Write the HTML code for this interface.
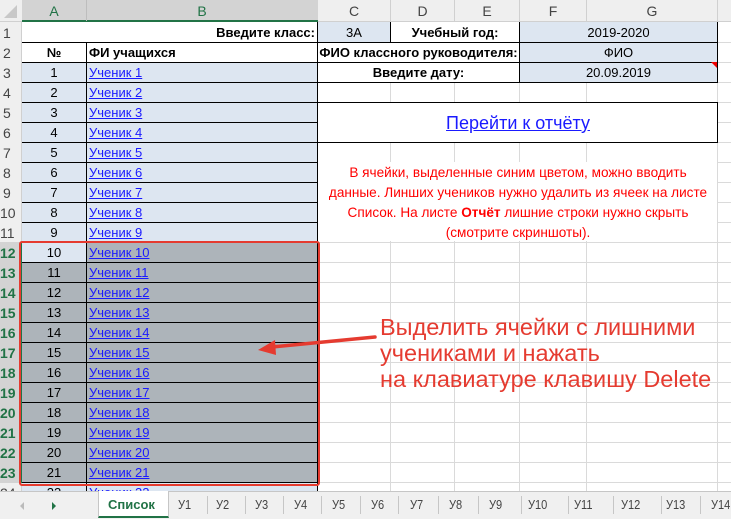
<!DOCTYPE html>
<html><head><meta charset="utf-8"><style>
*{margin:0;padding:0;box-sizing:border-box}
body{width:731px;height:519px;overflow:hidden;position:relative;background:#fff;font-family:"Liberation Sans",Arial,sans-serif;font-size:13px;color:#000}
.a{position:absolute}
.t{position:absolute;height:20px;line-height:20px;white-space:nowrap}
.ctr{text-align:center}
.b{font-weight:bold}
.lnk{color:#1a1aff;text-decoration:underline}
.rh{position:absolute;left:0;width:22px;height:20px;line-height:20px;padding-left:3px;color:#444;font-size:14px}
.rs{color:#217346;font-weight:bold}
.tab{position:absolute;top:497px;color:#444;font-size:13px;transform:scaleX(.85);transform-origin:left}
</style></head><body>
<div class="a" style="left:0;top:23px;width:731px;height:468px;background:repeating-linear-gradient(to bottom,transparent 0 19px,#dadada 19px 20px)"></div>
<div class="a" style="left:86px;top:0;width:1px;height:491px;background:#dadada"></div>
<div class="a" style="left:317px;top:0;width:1px;height:491px;background:#dadada"></div>
<div class="a" style="left:390px;top:0;width:1px;height:491px;background:#dadada"></div>
<div class="a" style="left:454px;top:0;width:1px;height:491px;background:#dadada"></div>
<div class="a" style="left:519px;top:0;width:1px;height:491px;background:#dadada"></div>
<div class="a" style="left:586px;top:0;width:1px;height:491px;background:#dadada"></div>
<div class="a" style="left:717px;top:0;width:1px;height:491px;background:#dadada"></div>

<div class="a" style="left:0;top:0;width:731px;height:22px;background:#efefef;border-bottom:1px solid #d0d0d0"></div>
<div class="a" style="left:4px;top:5px;width:0;height:0;border-left:13px solid transparent;border-bottom:13px solid #c8c8c8"></div>
<div class="a" style="left:22px;top:0;width:296px;height:22px;background:#d3d3d3;border-bottom:2px solid #217346"></div>
<div class="a" style="left:86px;top:0;width:1px;height:21px;background:#bdbdbd"></div>
<div class="t ctr" style="left:22px;top:1px;width:64px;color:#217346;font-size:14px">A</div>
<div class="t ctr" style="left:87px;top:1px;width:230px;color:#217346;font-size:14px">B</div>
<div class="t ctr" style="left:318px;top:1px;width:72px;color:#444;font-size:14px">C</div>
<div class="t ctr" style="left:391px;top:1px;width:63px;color:#444;font-size:14px">D</div>
<div class="t ctr" style="left:455px;top:1px;width:64px;color:#444;font-size:14px">E</div>
<div class="t ctr" style="left:520px;top:1px;width:66px;color:#444;font-size:14px">F</div>
<div class="t ctr" style="left:587px;top:1px;width:130px;color:#444;font-size:14px">G</div>
<div class="a" style="left:390px;top:0;width:1px;height:22px;background:#d0d0d0"></div>
<div class="a" style="left:454px;top:0;width:1px;height:22px;background:#d0d0d0"></div>
<div class="a" style="left:519px;top:0;width:1px;height:22px;background:#d0d0d0"></div>
<div class="a" style="left:586px;top:0;width:1px;height:22px;background:#d0d0d0"></div>
<div class="a" style="left:717px;top:0;width:1px;height:22px;background:#d0d0d0"></div>

<div class="a" style="left:0;top:22px;width:22px;height:469px;background:#efefef;border-right:1px solid #d0d0d0"></div>
<div class="a" style="left:0;top:242px;width:22px;height:241px;background:#d3d3d3;border-right:2px solid #217346"></div>
<div class="a" style="left:0;top:22px;width:22px;height:469px;background:repeating-linear-gradient(to bottom,transparent 0 20px,#d0d0d0 20px 21px);background-size:22px 20px"></div>
<div class="rh" style="top:23px">1</div><div class="rh" style="top:43px">2</div><div class="rh" style="top:63px">3</div><div class="rh" style="top:83px">4</div><div class="rh" style="top:103px">5</div><div class="rh" style="top:123px">6</div><div class="rh" style="top:143px">7</div><div class="rh" style="top:163px">8</div><div class="rh" style="top:183px">9</div><div class="rh" style="top:203px;padding-left:0">10</div><div class="rh" style="top:223px;padding-left:0">11</div>
<div class="rh rs" style="top:243px;padding-left:0">12</div><div class="rh rs" style="top:263px;padding-left:0">13</div><div class="rh rs" style="top:283px;padding-left:0">14</div><div class="rh rs" style="top:303px;padding-left:0">15</div><div class="rh rs" style="top:323px;padding-left:0">16</div><div class="rh rs" style="top:343px;padding-left:0">17</div><div class="rh rs" style="top:363px;padding-left:0">18</div><div class="rh rs" style="top:383px;padding-left:0">19</div><div class="rh rs" style="top:403px;padding-left:0">20</div><div class="rh rs" style="top:423px;padding-left:0">21</div><div class="rh rs" style="top:443px;padding-left:0">22</div><div class="rh rs" style="top:463px;padding-left:0">23</div><div class="rh" style="top:483px;padding-left:0">24</div>

<div class="a" style="left:22px;top:22px;width:296px;height:20px;background:#fff"></div>
<div class="a" style="left:22px;top:42px;width:296px;height:20px;background:#fff"></div>
<div class="a" style="left:22px;top:62px;width:296px;height:180px;background:#dde6f1"></div>
<div class="a" style="left:22px;top:242px;width:296px;height:241px;background:#adb4ba"></div>
<div class="a" style="left:22px;top:242px;width:65px;height:20px;background:#dde6f1"></div>
<div class="a" style="left:22px;top:482px;width:296px;height:9px;background:#dde6f1"></div>
<div class="a" style="left:318px;top:22px;width:73px;height:20px;background:#dde6f1"></div>
<div class="a" style="left:391px;top:22px;width:129px;height:20px;background:#fff"></div>
<div class="a" style="left:318px;top:42px;width:202px;height:40px;background:#fff"></div>
<div class="a" style="left:520px;top:22px;width:198px;height:60px;background:#dde6f1"></div>
<div class="a" style="left:318px;top:102px;width:400px;height:40px;background:#fff"></div>
<div class="a" style="left:318px;top:162px;width:399px;height:79px;background:#fff"></div>

<div class="a" style="left:22px;top:42px;width:296px;height:442px;background:repeating-linear-gradient(to bottom,#000 0 1px,transparent 1px 20px)"></div>
<div class="a" style="left:86px;top:42px;width:1px;height:449px;background:#000"></div>
<div class="a" style="left:317px;top:22px;width:1px;height:469px;background:#000"></div>
<div class="a" style="left:318px;top:42px;width:400px;height:1px;background:#000"></div>
<div class="a" style="left:318px;top:62px;width:400px;height:1px;background:#000"></div>
<div class="a" style="left:318px;top:82px;width:400px;height:1px;background:#000"></div>
<div class="a" style="left:390px;top:22px;width:1px;height:20px;background:#000"></div>
<div class="a" style="left:519px;top:22px;width:1px;height:60px;background:#000"></div>
<div class="a" style="left:717px;top:22px;width:1px;height:60px;background:#000"></div>
<div class="a" style="left:317px;top:102px;width:401px;height:41px;border:1px solid #000"></div>
<div class="a" style="left:711px;top:62px;width:0;height:0;border-left:6px solid transparent;border-top:6px solid #e00"></div>

<div class="t b" style="left:22px;top:23px;width:293px;text-align:right">Введите класс:</div>
<div class="t ctr" style="left:318px;top:23px;width:72px">3А</div>
<div class="t ctr b" style="left:391px;top:23px;width:128px">Учебный год:</div>
<div class="t ctr" style="left:520px;top:23px;width:197px">2019-2020</div>
<div class="t ctr b" style="left:22px;top:43px;width:64px">№</div>
<div class="t b" style="left:89px;top:43px">ФИ учащихся</div>
<div class="t ctr b" style="left:318px;top:43px;width:201px">ФИО классного руководителя:</div>
<div class="t ctr" style="left:520px;top:43px;width:197px">ФИО</div>
<div class="t ctr b" style="left:318px;top:63px;width:201px">Введите дату:</div>
<div class="t ctr" style="left:520px;top:63px;width:197px">20.09.2019</div>
<div class="t ctr lnk" style="left:318px;top:111px;width:400px;font-size:18px;height:24px;line-height:24px">Перейти к отчёту</div>
<div class="a ctr" style="left:318px;top:163px;width:400px;line-height:20px;color:#f00;font-size:13.6px;white-space:nowrap">В ячейки, выделенные синим цветом, можно вводить<br>данные. Линших учеников нужно удалить из ячеек на листе<br>Список. На листе <b>Отчёт</b> лишние строки нужно скрыть<br>(смотрите скриншоты).</div>

<div class="t ctr" style="left:22px;top:63px;width:64px">1</div><div class="t lnk" style="left:89px;top:63px">Ученик 1</div>
<div class="t ctr" style="left:22px;top:83px;width:64px">2</div><div class="t lnk" style="left:89px;top:83px">Ученик 2</div>
<div class="t ctr" style="left:22px;top:103px;width:64px">3</div><div class="t lnk" style="left:89px;top:103px">Ученик 3</div>
<div class="t ctr" style="left:22px;top:123px;width:64px">4</div><div class="t lnk" style="left:89px;top:123px">Ученик 4</div>
<div class="t ctr" style="left:22px;top:143px;width:64px">5</div><div class="t lnk" style="left:89px;top:143px">Ученик 5</div>
<div class="t ctr" style="left:22px;top:163px;width:64px">6</div><div class="t lnk" style="left:89px;top:163px">Ученик 6</div>
<div class="t ctr" style="left:22px;top:183px;width:64px">7</div><div class="t lnk" style="left:89px;top:183px">Ученик 7</div>
<div class="t ctr" style="left:22px;top:203px;width:64px">8</div><div class="t lnk" style="left:89px;top:203px">Ученик 8</div>
<div class="t ctr" style="left:22px;top:223px;width:64px">9</div><div class="t lnk" style="left:89px;top:223px">Ученик 9</div>
<div class="t ctr" style="left:22px;top:243px;width:64px">10</div><div class="t lnk" style="left:89px;top:243px">Ученик 10</div>
<div class="t ctr" style="left:22px;top:263px;width:64px">11</div><div class="t lnk" style="left:89px;top:263px">Ученик 11</div>
<div class="t ctr" style="left:22px;top:283px;width:64px">12</div><div class="t lnk" style="left:89px;top:283px">Ученик 12</div>
<div class="t ctr" style="left:22px;top:303px;width:64px">13</div><div class="t lnk" style="left:89px;top:303px">Ученик 13</div>
<div class="t ctr" style="left:22px;top:323px;width:64px">14</div><div class="t lnk" style="left:89px;top:323px">Ученик 14</div>
<div class="t ctr" style="left:22px;top:343px;width:64px">15</div><div class="t lnk" style="left:89px;top:343px">Ученик 15</div>
<div class="t ctr" style="left:22px;top:363px;width:64px">16</div><div class="t lnk" style="left:89px;top:363px">Ученик 16</div>
<div class="t ctr" style="left:22px;top:383px;width:64px">17</div><div class="t lnk" style="left:89px;top:383px">Ученик 17</div>
<div class="t ctr" style="left:22px;top:403px;width:64px">18</div><div class="t lnk" style="left:89px;top:403px">Ученик 18</div>
<div class="t ctr" style="left:22px;top:423px;width:64px">19</div><div class="t lnk" style="left:89px;top:423px">Ученик 19</div>
<div class="t ctr" style="left:22px;top:443px;width:64px">20</div><div class="t lnk" style="left:89px;top:443px">Ученик 20</div>
<div class="t ctr" style="left:22px;top:463px;width:64px">21</div><div class="t lnk" style="left:89px;top:463px">Ученик 21</div>
<div class="t ctr" style="left:22px;top:483px;width:64px">22</div><div class="t lnk" style="left:89px;top:483px">Ученик 22</div>

<div class="a" style="left:19px;top:241px;width:301px;height:245px;border:2px solid #e53b30;border-radius:3px"></div>

<svg class="a" style="left:0;top:0" width="731" height="519"><path d="M375 337 L272 347" stroke="#e53b30" stroke-width="3.5" stroke-linecap="round"/><path d="M258 350 L275 340 L276 355 Z" fill="#e53b30"/></svg>
<div class="a" style="left:380px;top:314px;color:#e53b30;font-size:23.5px;line-height:26px;white-space:nowrap">Выделить ячейки с лишними<br>учениками и нажать<br>на клавиатуре клавишу Delete</div>

<div class="a" style="left:0;top:491px;width:731px;height:28px;background:#f0f0f0;border-top:1px solid #c6c6c6"></div>
<div class="a" style="left:20px;top:502px;width:0;height:0;border-top:4px solid transparent;border-bottom:4px solid transparent;border-right:4px solid #bbb"></div>
<div class="a" style="left:52px;top:502px;width:0;height:0;border-top:4px solid transparent;border-bottom:4px solid transparent;border-left:4px solid #217346"></div>
<div class="a" style="left:98px;top:491px;width:71px;height:27px;background:#fff;border-bottom:2px solid #217346;border-left:1px solid #c6c6c6;border-right:1px solid #c6c6c6"></div>
<div class="a b" style="left:108px;top:497px;color:#217346;font-size:13px">Список</div>
<div class="a" style="left:0;top:496px;width:731px;height:18px;background:linear-gradient(#c6c6c6,#c6c6c6) 207px 0/1px 100% no-repeat,linear-gradient(#c6c6c6,#c6c6c6) 245px 0/1px 100% no-repeat,linear-gradient(#c6c6c6,#c6c6c6) 283px 0/1px 100% no-repeat,linear-gradient(#c6c6c6,#c6c6c6) 321px 0/1px 100% no-repeat,linear-gradient(#c6c6c6,#c6c6c6) 360px 0/1px 100% no-repeat,linear-gradient(#c6c6c6,#c6c6c6) 398px 0/1px 100% no-repeat,linear-gradient(#c6c6c6,#c6c6c6) 438px 0/1px 100% no-repeat,linear-gradient(#c6c6c6,#c6c6c6) 478px 0/1px 100% no-repeat,linear-gradient(#c6c6c6,#c6c6c6) 521px 0/1px 100% no-repeat,linear-gradient(#c6c6c6,#c6c6c6) 568px 0/1px 100% no-repeat,linear-gradient(#c6c6c6,#c6c6c6) 613px 0/1px 100% no-repeat,linear-gradient(#c6c6c6,#c6c6c6) 661px 0/1px 100% no-repeat,linear-gradient(#c6c6c6,#c6c6c6) 700px 0/1px 100% no-repeat"></div>
<div class="tab" style="left:178px">У1</div><div class="tab" style="left:216px">У2</div><div class="tab" style="left:255px">У3</div><div class="tab" style="left:294px">У4</div><div class="tab" style="left:332px">У5</div><div class="tab" style="left:371px">У6</div><div class="tab" style="left:410px">У7</div><div class="tab" style="left:449px">У8</div><div class="tab" style="left:489px">У9</div><div class="tab" style="left:528px">У10</div><div class="tab" style="left:574px">У11</div><div class="tab" style="left:621px">У12</div><div class="tab" style="left:666px">У13</div><div class="tab" style="left:711px">У14</div>
</body></html>
